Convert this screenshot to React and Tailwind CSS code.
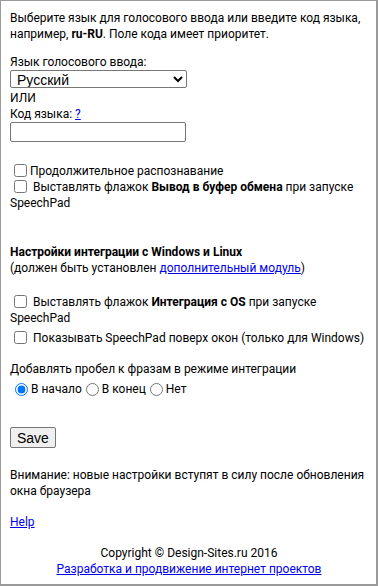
export default function App() {
  return (
    <div className="w-[378px] h-[586px] overflow-hidden bg-white border-t border-l border-r-2 border-b-2 border-[#9a9a9a] text-black text-[12px] leading-[16px] font-['Roboto',sans-serif]">
      <div className="pl-[9px] pr-[8px] pt-[9px]">
        <p>
          Выберите язык для голосового ввода или введите код языка, например, <b>ru-RU</b>. Поле кода имеет приоритет.
        </p>

        <div className="mt-[12px]">
          <div>Язык голосового ввода:</div>
          <select className="block w-[177px] h-[18px] border border-[#767676] rounded-[2px] bg-white text-[14px] leading-[16px] pl-[2px] font-['Liberation_Sans',sans-serif]">
            <option>Русский</option>
          </select>
          <div className="mt-[2px]">ИЛИ</div>
          <div>
            Код языка: <a href="#" className="text-[#0000ee] underline">?</a>
          </div>
          <input type="text" className="block w-[176px] h-[20px] border border-[#767676] rounded-[2px] bg-white" />
        </div>

        <div className="mt-[20px]">
          <label className="flex items-center h-[17px]">
            <input type="checkbox" className="m-0 ml-[4px] mr-[3px] w-[13px] h-[13px]" />
            <span>Продолжительное распознавание</span>
          </label>
          <label className="block">
            <input type="checkbox" className="m-0 ml-[4px] mr-[3px] w-[13px] h-[13px] align-[-2px]" />
            {' '}Выставлять флажок <b>Вывод в буфер обмена</b> при запуске SpeechPad
          </label>
        </div>

        <div className="mt-[33px]">
          <b>Настройки интеграции с Windows и Linux</b>
          <div>
            (должен быть установлен <a href="#" className="text-[#0000ee] underline">дополнительный модуль</a>)
          </div>
        </div>

        <div className="mt-[18px]">
          <label className="block">
            <input type="checkbox" className="m-0 ml-[4px] mr-[3px] w-[13px] h-[13px] align-[-2px]" />
            {' '}Выставлять флажок <b>Интеграция с OS</b> при запуске SpeechPad
          </label>
          <label className="block mt-[4px]">
            <input type="checkbox" className="m-0 ml-[4px] mr-[3px] w-[13px] h-[13px] align-[-2px]" />
            {' '}Показывать SpeechPad поверх окон (только для Windows)
          </label>
        </div>

        <div className="mt-[15px]">
          <div>Добавлять пробел к фразам в режиме интеграции</div>
          <div className="flex items-center h-[20px] mt-[2px]">
            <input type="radio" name="space" defaultChecked className="m-0 ml-[5px] mr-[3px] w-[13px] h-[13px]" />
            <span>В начало</span>
            <input type="radio" name="space" className="m-0 ml-[4px] mr-[3px] w-[13px] h-[13px]" />
            <span>В конец</span>
            <input type="radio" name="space" className="m-0 ml-[4px] mr-[3px] w-[13px] h-[13px]" />
            <span>Нет</span>
          </div>
        </div>

        <button className="block mt-[28px] h-[21px] px-[6px] bg-[#efefef] border border-[#767676] rounded-[2px] text-[14px] leading-[16px] font-['Liberation_Sans',sans-serif]">
          Save
        </button>

        <p className="mt-[19px]">Внимание: новые настройки вступят в силу после обновления окна браузера</p>

        <p className="mt-[15px]">
          <a href="#" className="text-[#0000ee] underline">Help</a>
        </p>

        <div className="mt-[15px] text-center">
          <div>Copyright © Design-Sites.ru 2016</div>
          <a href="#" className="text-[#0000ee] underline">Разработка и продвижение интернет проектов</a>
        </div>
      </div>
    </div>
  );
}
